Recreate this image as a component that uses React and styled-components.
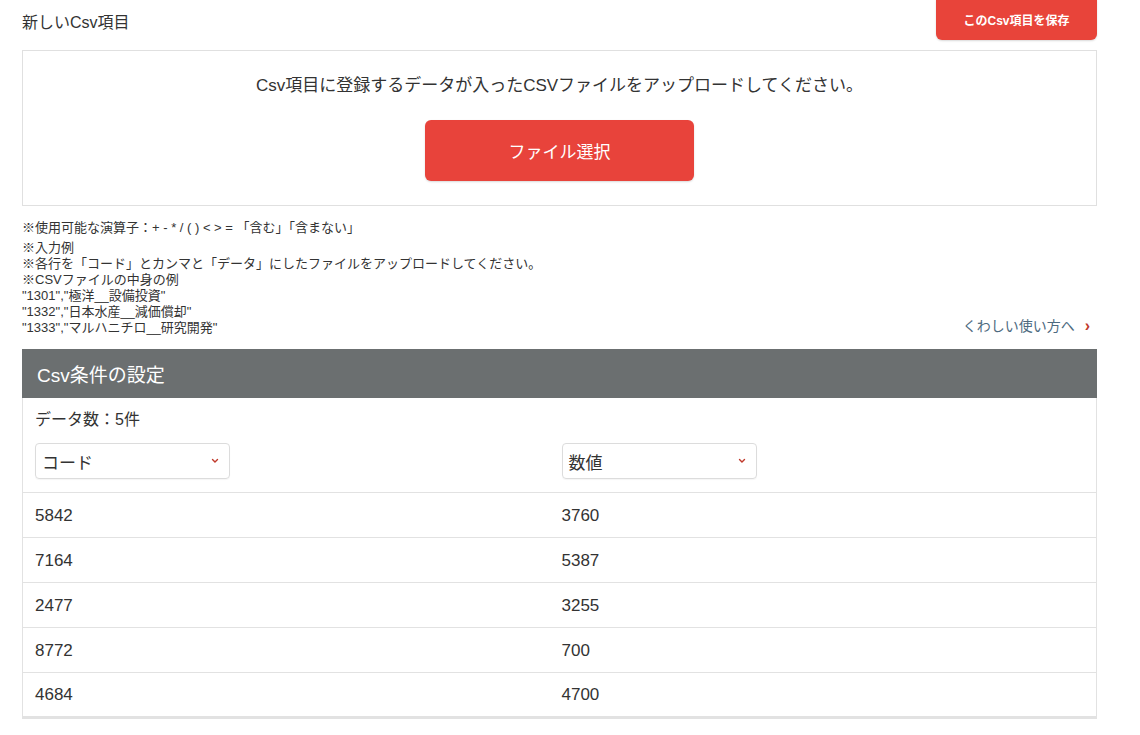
import React from "react";
import styled, { createGlobalStyle } from "styled-components";

const GlobalStyle = createGlobalStyle`
    body {
        margin: 0;
        background: #ffffff;
        font-family: "Liberation Sans", Arial, "Noto Sans CJK JP", sans-serif;
        color: #333333;
    }
`;

const rows = [
    ["5842", "3760"],
    ["7164", "5387"],
    ["2477", "3255"],
    ["8772", "700"],
    ["4684", "4700"],
];

const notes = [
    "※入力例",
    "※各行を「コード」とカンマと「データ」にしたファイルをアップロードしてください。",
    "※CSVファイルの中身の例",
    "\"1301\",\"極洋__設備投資\"",
    "\"1332\",\"日本水産__減価償却\"",
    "\"1333\",\"マルハニチロ__研究開発\"",
];

const Chevron = () => (
    <svg width="8" height="6" viewBox="0 0 8 6">
        <path d="M1.5 1.5 L4 4 L6.5 1.5" fill="none" stroke="#c0392b" strokeWidth="1.4" strokeLinecap="round" />
    </svg>
);

const App = () => {
    return (
        <Page>
            <GlobalStyle />
            <TopBar>
                <PageTitle>新しいCsv項目</PageTitle>
                <SaveButton>このCsv項目を保存</SaveButton>
            </TopBar>

            <UploadBox>
                <UploadText>Csv項目に登録するデータが入ったCSVファイルをアップロードしてください。</UploadText>
                <SelectFileButton>ファイル選択</SelectFileButton>
            </UploadBox>

            <NotesArea>
                <OperatorNote>※使用可能な演算子：+ - * / ( ) &lt; &gt; = 「含む」「含まない」</OperatorNote>
                <NoteFooter>
                    <NoteList>
                        {notes.map((line, i) => (
                            <NoteLine key={i}>{line}</NoteLine>
                        ))}
                    </NoteList>
                    <HelpLink>
                        くわしい使い方へ
                        <HelpArrow>›</HelpArrow>
                    </HelpLink>
                </NoteFooter>
            </NotesArea>

            <SettingPanel>
                <PanelHeader>Csv条件の設定</PanelHeader>
                <PanelBody>
                    <CountText>データ数：5件</CountText>
                    <SelectRow>
                        <FakeSelect>
                            <span>コード</span>
                            <Chevron />
                        </FakeSelect>
                        <FakeSelect>
                            <span>数値</span>
                            <Chevron />
                        </FakeSelect>
                    </SelectRow>
                </PanelBody>
                {rows.map((row, index) => (
                    <DataRow key={index}>
                        <DataCell>{row[0]}</DataCell>
                        <DataCell>{row[1]}</DataCell>
                    </DataRow>
                ))}
            </SettingPanel>
        </Page>
    );
};

const Page = styled.div`
    width: 1075px;
    margin-left: 22px;
    padding-bottom: 16px;
`;

const TopBar = styled.div`
    display: flex;
    justify-content: space-between;
    align-items: flex-start;
    height: 50px;
`;

const PageTitle = styled.h1`
    margin: 9px 0 0;
    font-size: 16px;
    font-weight: normal;
    color: #333333;
`;

const SaveButton = styled.button`
    width: 161px;
    height: 41px;
    margin-top: -1px;
    border: none;
    border-radius: 0 0 6px 6px;
    background-color: #e8443a;
    color: #ffffff;
    font-family: inherit;
    font-size: 12px;
    font-weight: bold;
    box-shadow: 0 1px 2px rgba(0, 0, 0, 0.15);
    cursor: pointer;
`;

const UploadBox = styled.div`
    height: 156px;
    box-sizing: border-box;
    border: 1px solid #e0e0e0;
    display: flex;
    flex-direction: column;
    align-items: center;
    padding-top: 24px;
`;

const UploadText = styled.p`
    margin: 0;
    font-size: 17px;
    line-height: 21px;
    color: #333333;
`;

const SelectFileButton = styled.button`
    margin-top: 24px;
    width: 269px;
    height: 61px;
    border: none;
    border-radius: 6px;
    background-color: #e8433b;
    color: #ffffff;
    font-family: inherit;
    font-size: 17px;
    box-shadow: 0 1px 2px rgba(0, 0, 0, 0.15);
    cursor: pointer;
`;

const NotesArea = styled.div`
    padding-top: 14px;
    font-size: 13px;
    color: #333333;
`;

const OperatorNote = styled.div`
    line-height: 16px;
`;

const NoteFooter = styled.div`
    display: flex;
    justify-content: space-between;
    align-items: flex-end;
    margin-top: 4px;
`;

const NoteList = styled.div`
    display: flex;
    flex-direction: column;
`;

const NoteLine = styled.div`
    line-height: 16px;
`;

const HelpLink = styled.a`
    display: flex;
    align-items: center;
    margin-right: 7px;
    margin-bottom: 1px;
    font-size: 14px;
    color: #4d6a80;
    cursor: pointer;
`;

const HelpArrow = styled.span`
    margin-left: 10px;
    margin-top: 3px;
    color: #c0392b;
    font-size: 16px;
    font-weight: bold;
`;

const SettingPanel = styled.div`
    margin-top: 13px;
    border: 1px solid #e2e2e2;
    border-top: none;
`;

const PanelHeader = styled.div`
    height: 49px;
    display: flex;
    align-items: center;
    padding-left: 15px;
    margin: 0 -1px;
    background-color: #6b6f70;
    color: #ffffff;
    font-size: 19px;
`;

const PanelBody = styled.div`
    padding: 11px 12px 13px;
    border-bottom: 1px solid #e2e2e2;
`;

const CountText = styled.div`
    font-size: 16px;
    line-height: 22px;
    color: #333333;
`;

const SelectRow = styled.div`
    display: grid;
    grid-template-columns: 1fr 1fr;
    column-gap: 4px;
    margin-top: 12px;
`;

const FakeSelect = styled.div`
    width: 195px;
    height: 36px;
    box-sizing: border-box;
    border: 1px solid #dcdcdc;
    border-radius: 4px;
    display: flex;
    align-items: center;
    justify-content: space-between;
    padding: 0 10px 0 6px;
    font-size: 17px;
    color: #333333;
    box-shadow: 0 1px 1px rgba(0, 0, 0, 0.04);
`;

const DataRow = styled.div`
    display: grid;
    grid-template-columns: 1fr 1fr;
    column-gap: 4px;
    padding: 1px 12px 0;
    height: 45px;
    box-sizing: border-box;
    align-items: center;
    border-bottom: 1px solid #e2e2e2;
    &:last-child {
        border-bottom-width: 2px;
    }
`;

const DataCell = styled.div`
    font-size: 17px;
    color: #333333;
`;

export default App;
